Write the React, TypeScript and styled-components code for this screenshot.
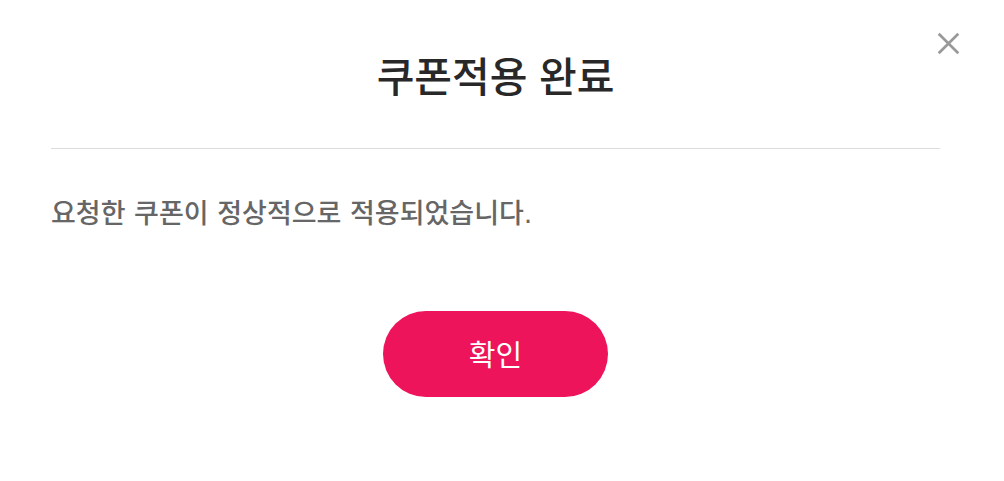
import React from "react";
import styled, { createGlobalStyle } from "styled-components";

const GlobalStyle = createGlobalStyle`
  * { box-sizing: border-box; }
  body {
    margin: 0;
    background: #fff;
    font-family: "Liberation Sans", "Noto Sans CJK KR", sans-serif;
    font-weight: 500;
  }
`;

const Dialog = styled.section`
  position: relative;
  padding: 48px 64px 84px 51px;
  background: #fff;
`;

const Header = styled.header`
  padding-bottom: 40px;
  border-bottom: 1px solid #dcdcdc;
`;

const Title = styled.h1`
  margin: 0;
  font-size: 41px;
  line-height: 60px;
  font-weight: 500;
  text-align: center;
  color: #282828;
`;

const Message = styled.p`
  margin: 45px 0 77px;
  font-family: "DejaVu Sans", "Noto Sans CJK KR", sans-serif;
  font-size: 27px;
  line-height: 40px;
  color: #666;
`;

const Actions = styled.div`
  display: flex;
  justify-content: center;
`;

const ConfirmButton = styled.button`
  min-width: 225px;
  height: 86px;
  padding: 0 40px 2px;
  border: 0;
  border-radius: 43px;
  background: #ee145b;
  color: #fff;
  font-family: "Noto Sans CJK KR", sans-serif;
  font-size: 29px;
  font-weight: 400;
  cursor: pointer;
`;

const CloseButton = styled.button`
  position: absolute;
  top: 32px;
  right: 44px;
  display: flex;
  padding: 0;
  border: 0;
  background: none;
  color: #999;
  cursor: pointer;
`;

export default function App() {
  return (
    <>
      <GlobalStyle />
      <Dialog role="dialog" aria-labelledby="dialog-title">
        <Header>
          <Title id="dialog-title">쿠폰적용 완료</Title>
        </Header>
        <Message>요청한 쿠폰이 정상적으로 적용되었습니다.</Message>
        <Actions>
          <ConfirmButton type="button">확인</ConfirmButton>
        </Actions>
        <CloseButton type="button" aria-label="닫기">
          <svg width="23" height="23" viewBox="0 0 23 23" fill="none" stroke="currentColor" strokeWidth="2.7">
            <path d="M1.7 1.7 21.3 21.3M21.3 1.7 1.7 21.3" />
          </svg>
        </CloseButton>
      </Dialog>
    </>
  );
}
